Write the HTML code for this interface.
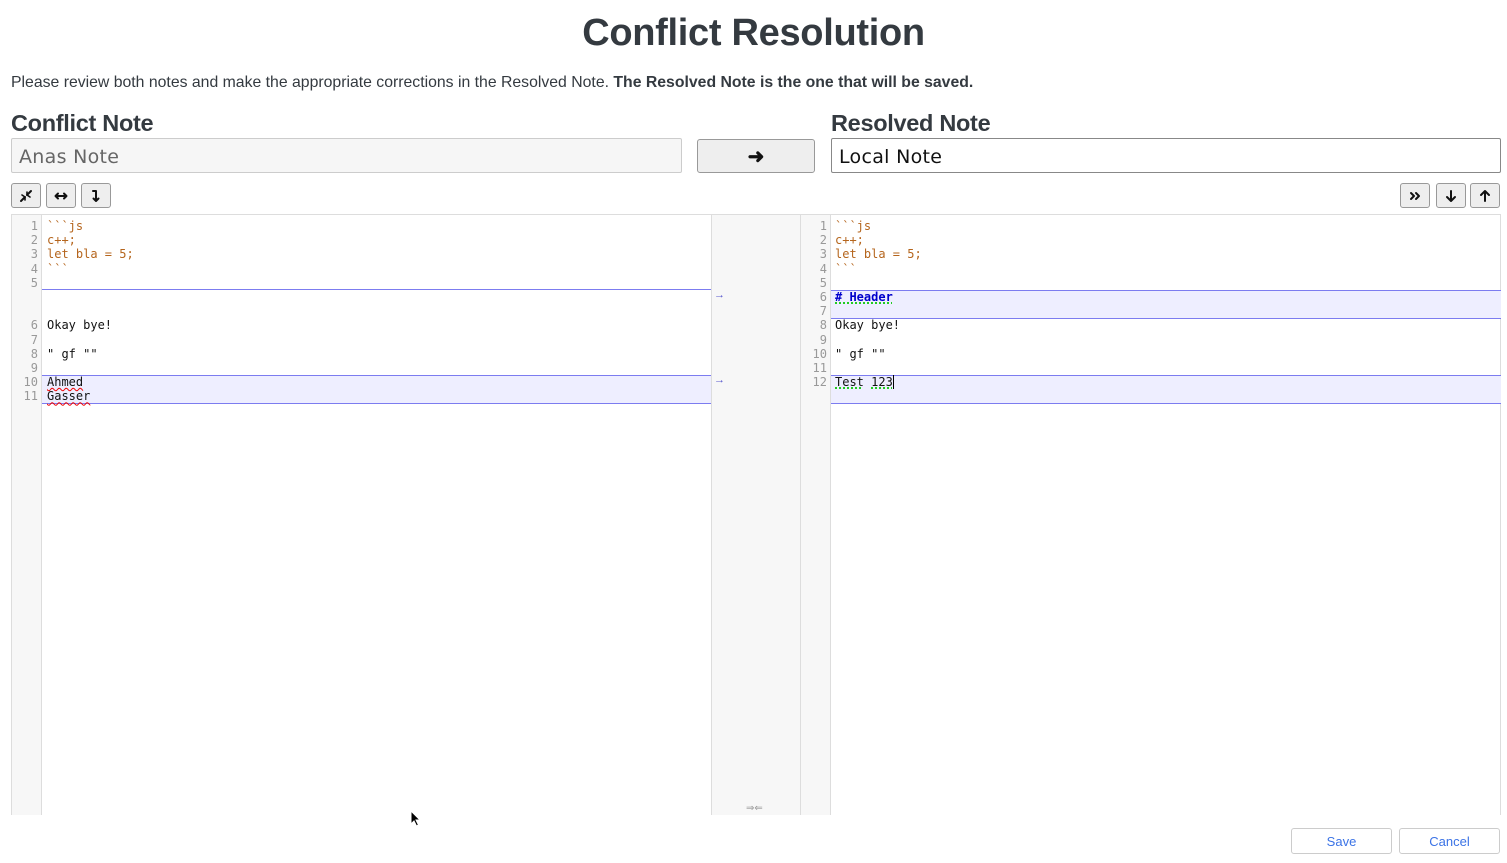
<!DOCTYPE html>
<html><head><meta charset="utf-8"><style>
*{box-sizing:border-box;margin:0;padding:0}
body{width:1507px;height:863px;background:#fff;font-family:"Liberation Sans",sans-serif;color:#343a40;position:relative;overflow:hidden}
.abs{position:absolute}
h1{position:absolute;left:0;width:1507px;text-align:center;top:12px;font-size:38px;font-weight:bold;color:#343a40;letter-spacing:-0.3px}
.p{left:11px;top:74px;font-size:15.8px;color:#343a40;white-space:nowrap}
.h{font-size:23.5px;font-weight:bold;top:110px;letter-spacing:-0.3px}
.inp{top:138px;height:35px;border:1px solid #ccc;border-radius:2px;font-size:19px;padding:7px 7px;font-family:"DejaVu Sans",sans-serif;letter-spacing:0.3px}
.btn{background:#eee;border:1px solid #999;border-radius:3px;display:flex;align-items:center;justify-content:center;color:#111;font-weight:bold}
.sb{top:183px;width:30px;height:25px;font-size:16px}
.ed{top:214px;height:601px;background:#fff;border-top:1px solid #ddd}
.gut{background:#f7f7f7;border-right:1px solid #ddd}
.code{font-family:"DejaVu Sans Mono",monospace;font-size:12px;line-height:14.2px;white-space:pre}
.ln{color:#999;text-align:right;width:27px}
.o{color:#b5651d}
.hl{background:#eeeeff;border-top:1px solid #7c7cf0;border-bottom:1px solid #7c7cf0}
.sq{text-decoration:underline wavy #e00;text-decoration-thickness:1px}
.sqg{text-decoration:underline dotted #2c2;text-decoration-thickness:2px}
.fb{top:828px;height:26px;width:101px;border:1px solid #ccc;border-radius:3px;background:#fff;color:#3b73e6;font-size:13px;display:flex;align-items:center;justify-content:center}
svg.i{width:14px;height:14px;stroke:#111;stroke-width:2;fill:none;stroke-linecap:round;stroke-linejoin:round}
</style></head><body>
<h1>Conflict Resolution</h1>
<div class="abs p">Please review both notes and make the appropriate corrections in the Resolved Note. <b>The Resolved Note is the one that will be saved.</b></div>
<div class="abs h" style="left:11px">Conflict Note</div>
<div class="abs h" style="left:831px">Resolved Note</div>
<div class="abs inp" style="left:11px;width:671px;background:#f6f6f6;color:#666">Anas Note</div>
<div class="abs btn" style="left:697px;top:139px;width:118px;height:34px;font-size:20px">&#10140;</div>
<div class="abs inp" style="left:831px;width:670px;color:#111;border-color:#888">Local Note</div>

<div class="abs btn sb" style="left:11px"><svg class="i" viewBox="0 0 14 14"><path d="M2 12L6 8M12 2L8 6"/><path d="M3 6L6 8L6 11M11 8L8 6L8 3" stroke-width="1.6"/></svg></div>
<div class="abs btn sb" style="left:46px"><svg class="i" viewBox="0 0 14 14"><path d="M1.5 7H12.5M4 4.5L1.5 7L4 9.5M10 4.5L12.5 7L10 9.5"/></svg></div>
<div class="abs btn sb" style="left:81px"><svg class="i" viewBox="0 0 14 14"><path d="M4 2H7V12M4.5 9.5L7 12L9.5 9.5"/></svg></div>
<div class="abs btn sb" style="left:1400px"><svg class="i" viewBox="0 0 14 14"><path d="M3 4L6 7L3 10M8 4L11 7L8 10"/></svg></div>
<div class="abs btn sb" style="left:1436px"><svg class="i" viewBox="0 0 14 14"><path d="M7 2V12M3 8L7 12L11 8"/></svg></div>
<div class="abs btn sb" style="left:1470px"><svg class="i" viewBox="0 0 14 14"><path d="M7 12V2M3 6L7 2L11 6"/></svg></div>

<div class="abs ed" style="left:11px;width:700px;border-left:1px solid #ddd"></div>
<div class="abs gut ed" style="left:11px;width:31px;border-left:1px solid #ddd"></div>
<div class="abs" style="left:42px;top:289px;width:669px;height:1px;background:#7c7cf0"></div>
<div class="abs hl" style="left:42px;top:375px;width:669px;height:29px"></div>
<div class="abs code ln" style="left:11px;top:219px">1
2
3
4
5


6
7
8
9
10
11</div>
<div class="abs code" style="left:47px;top:219px;color:#111"><span class="o">&#96;&#96;&#96;js
c++;
let bla = 5;
&#96;&#96;&#96;</span>



Okay bye!

" gf ""

<span class="sq">Ahmed</span>
<span class="sq">Gasser</span></div>

<div class="abs ed" style="left:711px;width:90px;background:#f7f7f7;border-left:1px solid #ddd;border-right:1px solid #ddd"></div>
<div class="abs" style="left:714px;top:289px;color:#55c;font-size:11px">&#8594;</div>
<div class="abs" style="left:714px;top:374px;color:#55c;font-size:11px">&#8594;</div>
<div class="abs" style="left:746px;top:803px;color:#999;font-size:10px">&#8658;&#8656;</div>

<div class="abs ed" style="left:801px;width:700px;border-right:1px solid #ddd"></div>
<div class="abs gut ed" style="left:801px;width:30px"></div>
<div class="abs hl" style="left:831px;top:290px;width:670px;height:29px"></div>
<div class="abs hl" style="left:831px;top:375px;width:670px;height:29px"></div>
<div class="abs code ln" style="left:800px;top:219px">1
2
3
4
5
6
7
8
9
10
11
12</div>
<div class="abs code" style="left:835px;top:219px;color:#111"><span class="o">&#96;&#96;&#96;js
c++;
let bla = 5;
&#96;&#96;&#96;</span>

<b class="sqg" style="color:#00c"># Header</b>

Okay bye!

" gf ""

<span class="sqg">Test</span> <span class="sqg">123</span><span style="border-left:1px solid #000"></span></div>

<div class="abs fb" style="left:1291px">Save</div>
<div class="abs fb" style="left:1399px">Cancel</div>
<svg class="abs" style="left:410px;top:810px" width="12" height="18" viewBox="0 0 12 18"><path d="M1 1 L1 14 L4 11 L6.5 16 L8.5 15 L6 10 L10 10 Z" fill="#000" stroke="#fff" stroke-width="1"/></svg>
</body></html>
